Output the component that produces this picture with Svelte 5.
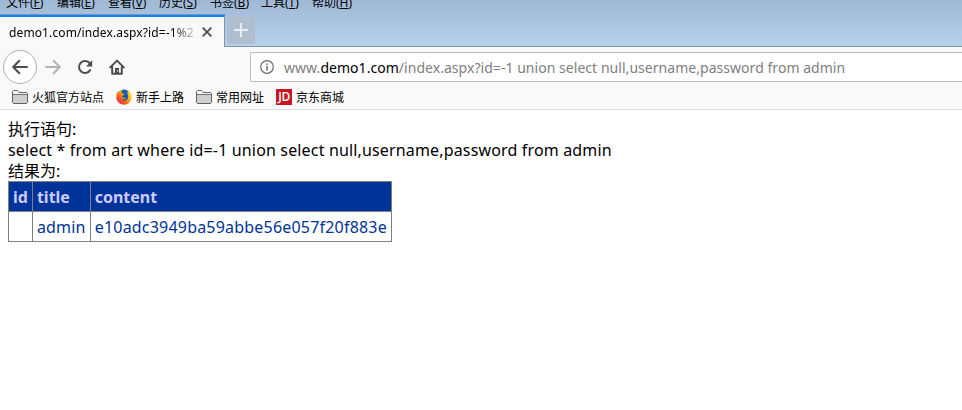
<script>
  const menus = [
    { label: "文件", key: "F" },
    { label: "编辑", key: "E" },
    { label: "查看", key: "V" },
    { label: "历史", key: "S" },
    { label: "书签", key: "B" },
    { label: "工具", key: "T" },
    { label: "帮助", key: "H" },
  ];

  const bookmarks = [
    { icon: "folder", label: "火狐官方站点" },
    { icon: "firefox", label: "新手上路" },
    { icon: "folder", label: "常用网址" },
    { icon: "jd", label: "京东商城" },
  ];

  const query = "id=-1 union select null,username,password from admin";
  const columns = ["id", "title", "content"];
  const rows = [["", "admin", "e10adc3949ba59abbe56e057f20f883e"]];
</script>

<div class="window">
  <header class="titlebar">
    <nav class="menus">
      {#each menus as menu}
        <span class="menu">{menu.label}(<u>{menu.key}</u>)</span>
      {/each}
    </nav>
    <div class="tabs">
      <div class="tab">
        <span class="tab-title">demo1.com/index.aspx?id=-1%2</span>
        <svg width="10" height="10" viewBox="0 0 10 10">
          <path d="M.7 .7l8.6 8.6M9.3 .7L.7 9.3" fill="none" stroke="#4c4c4c" stroke-width="1.8" />
        </svg>
      </div>
      <div class="new-tab">
        <svg width="14" height="14" viewBox="0 0 14 14">
          <path d="M7 0v14M0 7h14" fill="none" stroke="#e8edf2" stroke-width="2" />
        </svg>
      </div>
    </div>
  </header>

  <div class="toolbar">
    <div class="back">
      <svg width="16" height="16" viewBox="0 0 16 16">
        <path d="M7.3 1.7L1.2 8l6.1 6.3M1.5 8H15" class="stroke" />
      </svg>
    </div>
    <svg class="forward" width="16" height="16" viewBox="0 0 16 16">
      <path d="M8.7 1.7L14.8 8l-6.1 6.3M14.5 8H1" class="stroke" />
    </svg>
    <svg class="reload" width="16" height="16" viewBox="0 0 16 16">
      <path d="M12.8 4.4A6 6 0 1 0 13.2 11" class="stroke" />
      <path d="M15.2 1.2v6.2H9z" fill="#4c4c4c" />
    </svg>
    <svg class="home" width="16" height="16" viewBox="0 0 16 16">
      <path d="M1.2 8.4L8 1.6l6.8 6.8M3.2 8v6.7h9.6V8" class="stroke" />
      <path d="M6 15V9h4v6z" fill="#4c4c4c" />
      <path d="M8.5 11.2v1.4" stroke="#fff" />
    </svg>
    <div class="urlbar">
      <svg width="14" height="14" viewBox="0 0 14 14">
        <circle cx="7" cy="7" r="6.3" fill="none" stroke="#6b6b6b" stroke-width="1.2" />
        <path d="M7 6v4.5M7 3.4v1.5" stroke="#6b6b6b" stroke-width="1.5" />
      </svg>
      <span class="url">www.<b>demo1.com</b>/index.aspx?{query}</span>
    </div>
  </div>

  <div class="bookmarks">
    {#each bookmarks as bookmark}
      <div class="bookmark">
        {#if bookmark.icon === "folder"}
          <svg width="16" height="16" viewBox="0 0 16 16">
            <path d="M.5 13.5v-11l1-1h4l1.5 2h7.5l1 1v9l-1 1h-13z" fill="#cfcfd1" stroke="#626262" />
            <path d="M1 3V2h4.5l1.5 2h8v1.5H1z" fill="#f4f4f4" />
            <path d="M1 5.5h14" stroke="#707070" />
          </svg>
        {:else if bookmark.icon === "firefox"}
          <svg width="16" height="16" viewBox="0 0 16 16">
            <defs>
              <linearGradient id="flame" x1="1" y1="0" x2="0" y2="1">
                <stop offset="0" stop-color="#fff23a" />
                <stop offset=".38" stop-color="#ffb800" />
                <stop offset=".65" stop-color="#ff5b16" />
                <stop offset="1" stop-color="#e31587" />
              </linearGradient>
            </defs>
            <circle cx="8" cy="7.3" r="6.7" fill="#155abf" />
            <path
              d="M1.6 2.6l1 1.1C3.4 2.3 5 1 6.5 1L5.4 3.2l1.1 1.3 2 .4-.4 1-1.8.9c-.2 1.6 1.1 2.5 2.6 2.1l1.3-.4c-.8 2.4-3.7 2.6-5.2 1.5 2.1 3 7.2 1.9 7.3-2.5 0-2.2-1.2-3.3-2.4-4.2 1 .1 2 .7 2.6 1.2C12.3 2.9 11.1 2 10.9.5c2.9 1.2 4.6 3.8 4.7 7.3C15.7 12.5 12 15.8 8 15.8S.3 12.6.3 8.3c0-2.2.5-3.9 1.3-5.7z"
              fill="url(#flame)"
            />
          </svg>
        {:else}
          <span class="jd">JD</span>
        {/if}
        <span>{bookmark.label}</span>
      </div>
    {/each}
  </div>

  <main>
    <div>执行语句:</div>
    <div class="sql">select * from art where {query}</div>
    <div>结果为:</div>
    <table>
      <thead>
        <tr>
          {#each columns as column}
            <th>{column}</th>
          {/each}
        </tr>
      </thead>
      <tbody>
        {#each rows as row}
          <tr>
            {#each row as cell}
              <td>{cell}</td>
            {/each}
          </tr>
        {/each}
      </tbody>
    </table>
  </main>
</div>

<style>
  :global(body) {
    background: #fff;
  }

  .window {
    height: 410px;
    overflow: hidden;
    font-family: "Noto Sans", "Noto Sans CJK SC", sans-serif;
    font-size: 12px;
    color: #000;
    white-space: nowrap;
  }

  svg {
    display: block;
    flex: none;
  }

  .stroke {
    fill: none;
    stroke: #4c4c4c;
    stroke-width: 2;
    stroke-linecap: round;
    stroke-linejoin: round;
  }

  .titlebar {
    box-sizing: border-box;
    height: 47px;
    background: linear-gradient(#9fb9d5, #b8d1eb);
    box-shadow: inset 0 -1px #8095ad;
  }

  .menus {
    display: flex;
    height: 14px;
    padding-left: 6px;
  }

  .menu {
    width: 51px;
    flex: none;
    line-height: 16px;
    margin-top: -5px;
  }

  .tabs {
    display: flex;
    height: 33px;
  }

  .tab {
    box-sizing: border-box;
    display: flex;
    align-items: center;
    width: 225px;
    padding: 0 12px 0 9px;
    background: #f9f9fa;
    border-top: 2px solid #0a84ff;
    border-right: 1px solid #8095ad;
    box-shadow: 0 -1px #8095ad;
    margin-top: 1px;
  }

  .tab-title {
    width: 188px;
    margin-right: 5px;
    letter-spacing: 0.12px;
    mask-image: linear-gradient(to right, #000 163px, transparent 190px);
  }

  .new-tab {
    display: flex;
    align-items: center;
    justify-content: center;
    width: 28px;
    height: 28px;
    margin: 2px 0 0 2px;
    border-radius: 2px;
    background: #afbfcf;
  }

  .toolbar {
    display: flex;
    align-items: center;
    height: 40px;
    padding-left: 3px;
    background: #f9f9fa;
  }

  .back {
    box-sizing: border-box;
    display: flex;
    align-items: center;
    justify-content: center;
    width: 34px;
    height: 34px;
    border: 1px solid #b1b1b1;
    border-radius: 50%;
    background: #fff;
  }

  .forward {
    margin-left: 8px;
    opacity: 0.4;
  }

  .reload,
  .home {
    margin-left: 16px;
  }

  .urlbar {
    box-sizing: border-box;
    display: flex;
    align-items: center;
    flex: 1;
    height: 30px;
    margin-left: 125px;
    padding-left: 9px;
    gap: 10px;
    border: 1px solid #bcbcbc;
    border-right: 0;
    border-radius: 2px 0 0 2px;
    background: #fff;
  }

  .url {
    font-size: 14px;
    letter-spacing: 0.04px;
    color: #808080;
  }

  .url b {
    font-weight: 400;
    color: #000;
  }

  .bookmarks {
    box-sizing: border-box;
    display: flex;
    gap: 12px;
    height: 23px;
    padding-left: 12px;
    background: #f9f9fa;
    border-bottom: 1px solid #dedede;
  }

  .bookmark {
    display: flex;
    align-items: center;
    gap: 4px;
    height: 20px;
  }

  .jd {
    width: 16px;
    height: 16px;
    background: #c81623;
    color: #fff;
    font: 600 12px/16px "Open Sans", sans-serif;
    text-align: center;
    letter-spacing: -0.3px;
  }

  main {
    padding: 9px 8px;
    font-size: 16px;
    line-height: 21px;
  }

  .sql {
    letter-spacing: 0.156px;
  }

  table {
    margin-top: -1px;
    border-collapse: collapse;
    color: #039;
    letter-spacing: 0.2px;
  }

  th,
  td {
    box-sizing: border-box;
    height: 30px;
    padding: 5px 4px 3px;
    border: 1px solid #808080;
    text-align: left;
  }

  th {
    background: #039;
    color: #ccf;
    letter-spacing: 0;
  }
</style>
